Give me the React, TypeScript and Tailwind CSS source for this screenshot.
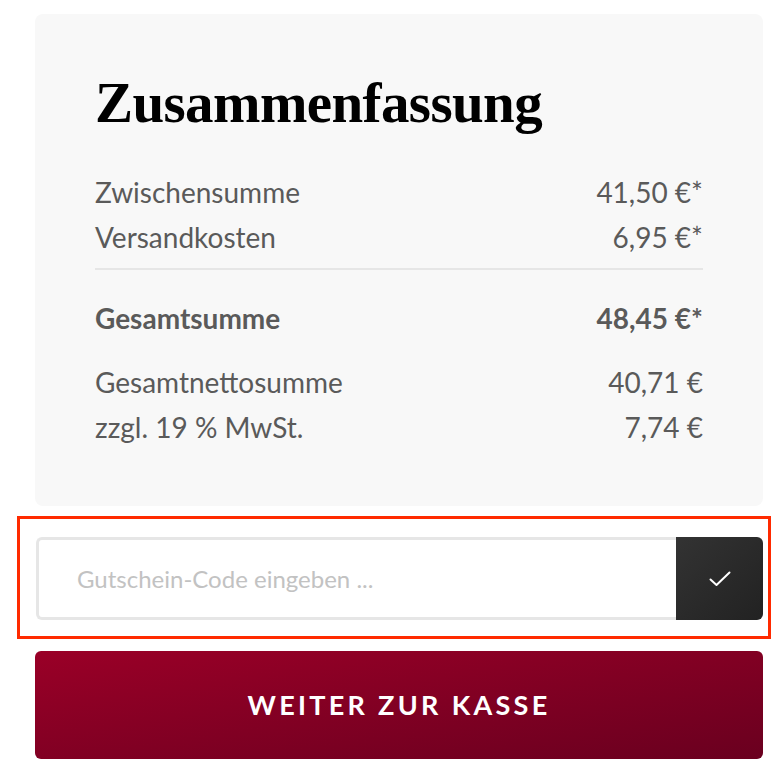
import React from "react";

const rows = [
  { label: "Zwischensumme", value: "41,50 €*" },
  { label: "Versandkosten", value: "6,95 €*" },
];

const netRows = [
  { label: "Gesamtnettosumme", value: "40,71 €" },
  { label: "zzgl. 19 % MwSt.", value: "7,74 €" },
];

const Row = ({ label, value, bold }: { label: string; value: string; bold?: boolean }) => (
  <div className={`flex justify-between items-center h-[45px] ${bold ? "font-bold" : ""}`}>
    <span>{label}</span>
    <span>{value}</span>
  </div>
);

export default function App() {
  return (
    <div className="w-[783px] min-h-[780px] bg-white pt-[14px] pl-[35px] pr-[20px] font-['Lato',sans-serif]">
      <div className="bg-[#f8f8f8] rounded-lg px-[60px] pt-[61px] pb-[57px]">
        <h2 className="font-['Liberation_Serif',serif] font-bold text-[57px] leading-[56px] text-black tracking-[-0.6px]">
          Zusammenfassung
        </h2>
        <div className="mt-[38px] text-[28px] text-[#5a5a5a]">
          {rows.map((r) => (
            <Row key={r.label} {...r} />
          ))}
          <div className="border-t-2 border-[#e6e6e6] mt-[9px] mb-[25px]" />
          <Row label="Gesamtsumme" value="48,45 €*" bold />
          <div className="mt-[19px]">
            {netRows.map((r) => (
              <Row key={r.label} {...r} />
            ))}
          </div>
        </div>
      </div>

      <div className="mt-[10px] -ml-[18px] -mr-[8px] border-[3px] border-[#ff2a00] pl-[16px] pr-[5px] pt-[18px] pb-[16px]">
        <div className="flex h-[83px]">
          <input
            className="flex-1 min-w-0 border-[3px] border-r-0 border-[#e6e6e6] rounded-l-md bg-white px-[38px] text-[24px] text-[#333] placeholder:text-[#c2c2c2] outline-none"
            placeholder="Gutschein-Code eingeben ..."
          />
          <button className="w-[87px] rounded-r-md bg-gradient-to-br from-[#333333] to-[#222222] flex items-center justify-center">
            <svg width="22" height="16" viewBox="0 0 22 16" fill="none">
              <path d="M1.5 8.5 L7.5 14 L20.5 1.5" stroke="white" strokeWidth="2" strokeLinecap="round" strokeLinejoin="round" />
            </svg>
          </button>
        </div>
      </div>

      <button className="mt-[12px] w-full h-[108px] rounded-md bg-gradient-to-br from-[#9a0027] to-[#6a001f] text-white font-bold text-[27px] tracking-[3.3px] flex items-center justify-center">
        WEITER ZUR KASSE
      </button>
    </div>
  );
}
